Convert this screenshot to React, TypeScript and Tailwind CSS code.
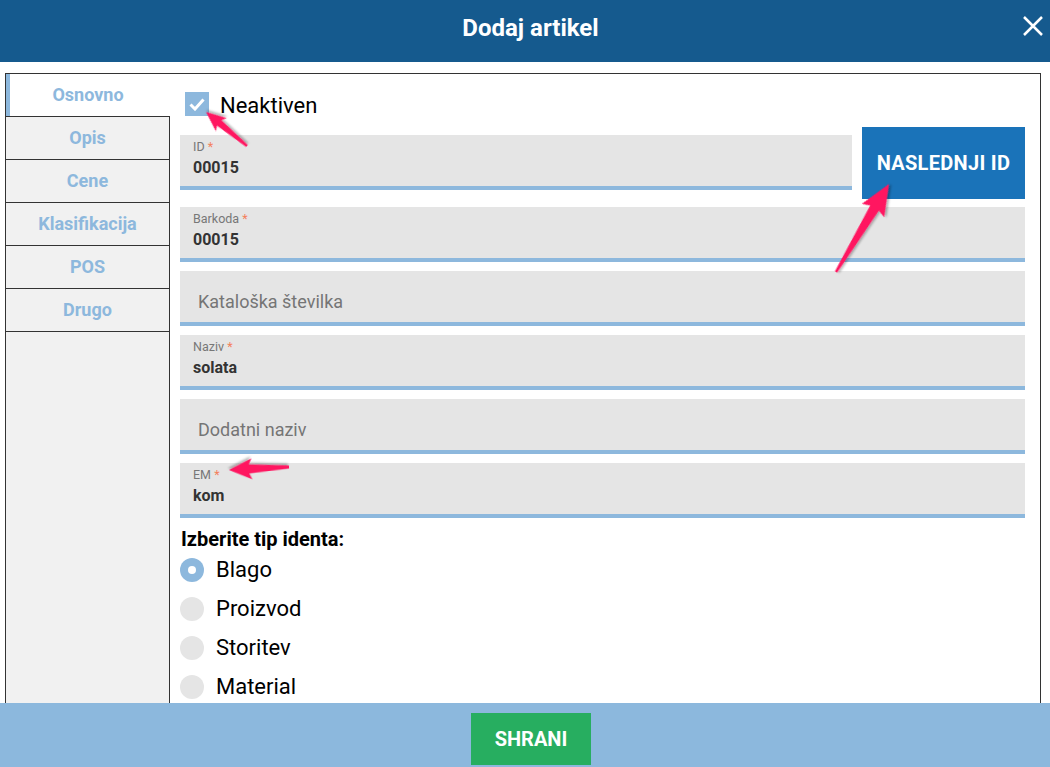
import React from "react";

function Arrow({ x1, y1, x2, y2, head, hw, sw, tw }: { x1: number; y1: number; x2: number; y2: number; head: number; hw: number; sw: number; tw: number }) {
  const len = Math.hypot(x2 - x1, y2 - y1);
  const ang = (Math.atan2(y2 - y1, x2 - x1) * 180) / Math.PI;
  const b = len - head;
  const pts = `0,${-tw} ${b},${-sw} ${b - 3},${-hw} ${len},0 ${b - 3},${hw} ${b},${sw} 0,${tw}`;
  return <polygon points={pts} fill="#ff1560" transform={`translate(${x1} ${y1}) rotate(${ang})`} filter="url(#sh)" />;
}

function Field({ label, value, placeholder }: { label?: string; value?: string; placeholder?: string }) {
  if (placeholder) {
    return (
      <div className="h-[55px] bg-[#e5e5e5] border-b-4 border-[#8db8dd] flex items-center pl-[18px] pt-[9px]">
        <span className="text-[18px] text-[#757575]">{placeholder}</span>
      </div>
    );
  }
  return (
    <div className="h-[55px] bg-[#e5e5e5] border-b-4 border-[#8db8dd] pl-[13px] pt-[4px]">
      <div className="text-[12.5px] leading-[16px] text-[#777]">
        {label} <span className="text-[#f4805c]">*</span>
      </div>
      <div className="text-[16px] leading-[22px] font-bold text-[#333] mt-[2px]">{value}</div>
    </div>
  );
}

export default function App() {
  const tabs = ["Opis", "Cene", "Klasifikacija", "POS", "Drugo"];
  const radios = ["Blago", "Proizvod", "Storitev", "Material"];
  return (
    <div className="relative w-[1050px] h-[767px] flex flex-col overflow-hidden bg-white" style={{ fontFamily: "Roboto, 'Liberation Sans', sans-serif" }}>
      <div className="relative h-[62px] shrink-0 bg-[#155a8e] flex items-center justify-center pl-[11px] pb-[6px]">
        <span className="text-white font-bold text-[24px] leading-none">Dodaj artikel</span>
        <svg className="absolute right-[7px] top-[16px]" width="20" height="20" viewBox="0 0 20 20">
          <path d="M1 1 L19 19 M19 1 L1 19" stroke="white" strokeWidth="2.5" />
        </svg>
      </div>
      <div className="flex-1 min-h-0 overflow-hidden pt-[11px] pl-[5px] pr-[9px]">
        <div className="border border-[#333] flex h-[700px]">
          <div className="w-[164px] shrink-0 flex flex-col bg-[#f1f1f1]">
            <div className="h-[42px] bg-white border-l-4 border-[#8db8dd] flex items-center justify-center pr-[4px] pb-[2px]">
              <span className="text-[18px] font-bold text-[#8db8dd]">Osnovno</span>
            </div>
            {tabs.map((t) => (
              <div key={t} className="h-[43px] border-t border-r border-[#333] flex items-center justify-center pb-[1px]">
                <span className="text-[18px] font-bold text-[#8db8dd]">{t}</span>
              </div>
            ))}
            <div className="flex-1 border-t border-r border-[#333]" />
          </div>
          <div className="flex-1 pl-[10px] pr-[15px] pt-[18px]">
            <div className="h-[24px] flex items-center">
              <div className="ml-[5px] w-[24px] h-[24px] bg-[#8db8dd] flex items-center justify-center">
                <svg width="16" height="14" viewBox="0 0 16 14">
                  <path d="M1.5 7.5 L6 12 L14.5 2.5" stroke="white" strokeWidth="3" fill="none" />
                </svg>
              </div>
              <span className="ml-[11px] text-[22px] leading-[24px] text-black pt-[3px]">Neaktiven</span>
            </div>
            <div className="mt-[11px] flex items-start gap-[10px]">
              <div className="flex-1 mt-[8px]">
                <Field label="ID" value="00015" />
              </div>
              <div className="w-[163px] h-[72px] bg-[#1a73b9] flex items-center justify-center">
                <span className="text-white font-bold text-[20px] tracking-[0.3px]">NASLEDNJI ID</span>
              </div>
            </div>
            <div className="mt-[8px] flex flex-col gap-[9px]">
              <Field label="Barkoda" value="00015" />
              <Field placeholder="Kataloška številka" />
              <Field label="Naziv" value="solata" />
              <Field placeholder="Dodatni naziv" />
              <Field label="EM" value="kom" />
            </div>
            <div className="mt-[10px] ml-[1px] text-[20px] leading-[22px] font-bold text-black">Izberite tip identa:</div>
            <div className="flex flex-col">
              {radios.map((r, i) => (
                <div key={r} className="h-[39px] flex items-center gap-[12px]">
                  {i === 0 ? (
                    <div className="w-[24px] h-[24px] rounded-full bg-[#8db8dd] flex items-center justify-center">
                      <div className="w-[8px] h-[8px] rounded-full bg-white" />
                    </div>
                  ) : (
                    <div className="w-[24px] h-[24px] rounded-full bg-[#e5e5e5]" />
                  )}
                  <span className="text-[22px] text-black">{r}</span>
                </div>
              ))}
            </div>
          </div>
        </div>
      </div>
      <div className="h-[64px] shrink-0 bg-[#8cb8dd] flex justify-center pl-[12px] pt-[10px]">
        <div className="w-[120px] h-[52px] bg-[#27ae60] flex items-center justify-center">
          <span className="text-white font-bold text-[20px]">SHRANI</span>
        </div>
      </div>
      <svg className="absolute inset-0 pointer-events-none" width="1050" height="767">
        <defs>
          <filter id="sh" x="-20%" y="-20%" width="140%" height="140%">
            <feDropShadow dx="1" dy="2" stdDeviation="1.2" floodColor="#000" floodOpacity="0.3" />
          </filter>
        </defs>
        <Arrow x1={247} y1={146} x2={206} y2={112} head={17} hw={8.5} sw={3.5} tw={1.3} />
        <Arrow x1={836} y1={272} x2={889} y2={184} head={28} hw={13} sw={5} tw={1.3} />
        <Arrow x1={289} y1={467} x2={229} y2={470} head={20} hw={10.5} sw={4.5} tw={1.6} />
      </svg>
    </div>
  );
}
